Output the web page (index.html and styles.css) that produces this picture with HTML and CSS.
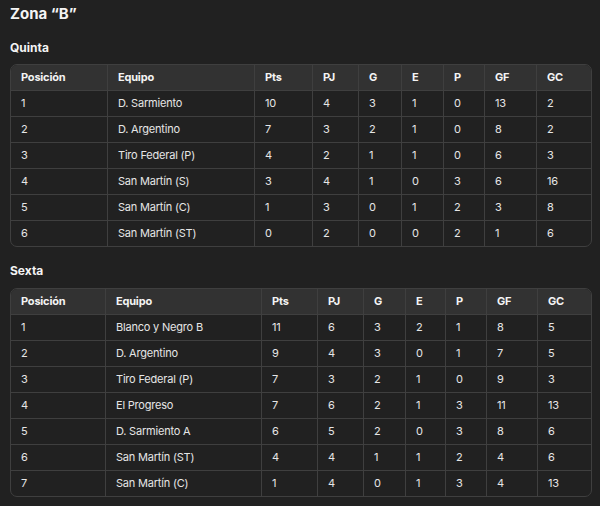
FILE: index.html
```html
<!DOCTYPE html>
<html lang="es">
<head>
<meta charset="utf-8">
<link rel="stylesheet" href="styles.css">
</head>
<body>
<h2 class="title">Zona “B”</h2>

<h3 class="sub">Quinta</h3>
<div class="tbl-wrap">
<table class="tbl">
<colgroup>
<col style="width:97px"><col style="width:147px"><col style="width:58px"><col style="width:46px"><col style="width:43px"><col style="width:42px"><col style="width:41px"><col style="width:52px"><col>
</colgroup>
<thead>
<tr><th>Posición</th><th>Equipo</th><th>Pts</th><th>PJ</th><th>G</th><th>E</th><th>P</th><th>GF</th><th>GC</th></tr>
</thead>
<tbody>
<tr><td>1</td><td>D. Sarmiento</td><td>10</td><td>4</td><td>3</td><td>1</td><td>0</td><td>13</td><td>2</td></tr>
<tr><td>2</td><td>D. Argentino</td><td>7</td><td>3</td><td>2</td><td>1</td><td>0</td><td>8</td><td>2</td></tr>
<tr><td>3</td><td>Tiro Federal (P)</td><td>4</td><td>2</td><td>1</td><td>1</td><td>0</td><td>6</td><td>3</td></tr>
<tr><td>4</td><td>San Martín (S)</td><td>3</td><td>4</td><td>1</td><td>0</td><td>3</td><td>6</td><td>16</td></tr>
<tr><td>5</td><td>San Martín (C)</td><td>1</td><td>3</td><td>0</td><td>1</td><td>2</td><td>3</td><td>8</td></tr>
<tr><td>6</td><td>San Martín (ST)</td><td>0</td><td>2</td><td>0</td><td>0</td><td>2</td><td>1</td><td>6</td></tr>
</tbody>
</table>
</div>

<h3 class="sub second">Sexta</h3>
<div class="tbl-wrap">
<table class="tbl">
<colgroup>
<col style="width:95px"><col style="width:156px"><col style="width:56px"><col style="width:46px"><col style="width:42px"><col style="width:40px"><col style="width:41px"><col style="width:51px"><col>
</colgroup>
<thead>
<tr><th>Posición</th><th>Equipo</th><th>Pts</th><th>PJ</th><th>G</th><th>E</th><th>P</th><th>GF</th><th>GC</th></tr>
</thead>
<tbody>
<tr><td>1</td><td>Blanco y Negro B</td><td>11</td><td>6</td><td>3</td><td>2</td><td>1</td><td>8</td><td>5</td></tr>
<tr><td>2</td><td>D. Argentino</td><td>9</td><td>4</td><td>3</td><td>0</td><td>1</td><td>7</td><td>5</td></tr>
<tr><td>3</td><td>Tiro Federal (P)</td><td>7</td><td>3</td><td>2</td><td>1</td><td>0</td><td>9</td><td>3</td></tr>
<tr><td>4</td><td>El Progreso</td><td>7</td><td>6</td><td>2</td><td>1</td><td>3</td><td>11</td><td>13</td></tr>
<tr><td>5</td><td>D. Sarmiento A</td><td>6</td><td>5</td><td>2</td><td>0</td><td>3</td><td>8</td><td>6</td></tr>
<tr><td>6</td><td>San Martín (ST)</td><td>4</td><td>4</td><td>1</td><td>1</td><td>2</td><td>4</td><td>6</td></tr>
<tr><td>7</td><td>San Martín (C)</td><td>1</td><td>4</td><td>0</td><td>1</td><td>3</td><td>4</td><td>13</td></tr>
</tbody>
</table>
</div>
</body>
</html>
```

FILE: styles.css
```css
html, body {
  margin: 0;
  background: #212121;
}
body {
  padding: 3px 8px 0 10px;
  font-family: Inter, "Noto Sans", sans-serif;
  color: #ececec;
}
.title {
  margin: 0;
  font-size: 15px;
  line-height: 22px;
  font-weight: 700;
  color: #f4f4f4;
}
.sub {
  margin: 14px 0 7px;
  font-size: 12px;
  line-height: 18px;
  font-weight: 700;
  color: #f4f4f4;
}
.sub.second {
  margin: 15px 0 8px;
}
.tbl-wrap {
  border: 1px solid #3f3f3f;
  border-radius: 7px;
  overflow: hidden;
}
.tbl {
  width: 100%;
  border-collapse: separate;
  border-spacing: 0;
  table-layout: fixed;
  font-size: 11px;
  letter-spacing: -0.2px;
}
.tbl th, .tbl td {
  padding: 0 9px 0 10px;
  line-height: 25px;
  text-align: left;
  border-right: 1px solid #3f3f3f;
  border-bottom: 1px solid #3f3f3f;
  white-space: nowrap;
}
.tbl th:last-child, .tbl td:last-child {
  border-right: none;
}
.tbl tbody tr:last-child td {
  border-bottom: none;
}
.tbl th {
  background: #323232;
  font-weight: 700;
  color: #f4f4f4;
}
.tbl td {
  color: #e6e6e6;
}
```
